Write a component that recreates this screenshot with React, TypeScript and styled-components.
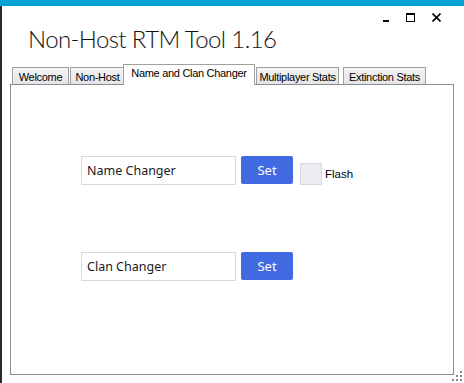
import React from "react";
import styled, { createGlobalStyle } from "styled-components";

const GlobalStyle = createGlobalStyle`
  html, body {
    margin: 0;
    padding: 0;
    background: #ffffff;
  }
`;

const Window = styled.div`
  position: relative;
  width: 464px;
  height: 383px;
  background: #ffffff;
  overflow: hidden;
  font-family: "Liberation Sans", Arial, sans-serif;
`;

const AccentBar = styled.div`
  height: 6px;
  background: #00a2d4;
`;

const Frame = styled.div`
  height: 377px;
  border-left: 2px solid #2b2b2b;
  box-sizing: border-box;
`;

const Controls = styled.div`
  display: flex;
  justify-content: flex-end;
  align-items: center;
  gap: 17px;
  height: 10px;
  padding: 6px 23px 0 0;
`;

const ControlIcon = styled.svg`
  display: block;
`;

const Title = styled.h1`
  margin: 0;
  padding: 0 0 0 26px;
  height: 41px;
  box-sizing: border-box;
  font-family: "Lato", "Open Sans", sans-serif;
  font-weight: 300;
  font-size: 24px;
  letter-spacing: -0.6px;
  line-height: 34px;
  color: #111111;
`;

const TabStrip = styled.div`
  display: flex;
  align-items: flex-end;
  height: 21px;
  padding-left: 10px;
  position: relative;
  z-index: 1;
`;

const Tab = styled.div<{ active?: boolean; w: number; offset: number }>`
  box-sizing: border-box;
  width: ${({ w }) => w}px;
  margin-left: ${({ offset }) => offset}px;
  height: ${({ active }) => (active ? "21px" : "17px")};
  margin-bottom: ${({ active }) => (active ? "-1px" : "0")};
  padding-top: ${({ active }) => (active ? "2px" : "3px")};
  border: 1px solid #a0a0a0;
  border-bottom: none;
  background: ${({ active }) =>
    active ? "#ffffff" : "linear-gradient(#f4f4f4, #e4e4e4)"};
  font-size: 11px;
  line-height: 13px;
  letter-spacing: -0.3px;
  text-align: center;
  color: #000000;
  white-space: nowrap;
  position: relative;
  z-index: ${({ active }) => (active ? 2 : 0)};
`;

const Panel = styled.div`
  box-sizing: border-box;
  margin-left: 8px;
  width: 444px;
  height: 291px;
  border: 1px solid #898c95;
  padding: 71px 0 0 70px;
  display: flex;
  flex-direction: column;
  gap: 67px;
`;

const Row = styled.div`
  display: flex;
  align-items: flex-start;
  gap: 5px;
`;

const TextBox = styled.div`
  box-sizing: border-box;
  width: 155px;
  height: 29px;
  border: 1px solid #d6d9e2;
  padding: 0 5px;
  font-family: "Noto Sans", "Open Sans", sans-serif;
  font-size: 12.5px;
  line-height: 27px;
  color: #1a1a1a;
`;

const SetButton = styled.button`
  box-sizing: border-box;
  width: 52px;
  height: 28px;
  border: none;
  border-radius: 2px;
  background: #4169e1;
  color: #ffffff;
  font-family: "Noto Sans", "Open Sans", sans-serif;
  font-size: 13px;
  padding: 0;
`;

const CheckWrap = styled.label`
  display: flex;
  align-items: center;
  gap: 3px;
  margin: 7px 0 0 2px;
  font-size: 11.5px;
  color: #000000;
`;

const CheckBox = styled.span`
  box-sizing: border-box;
  width: 22px;
  height: 22px;
  border: 1px solid #d6d8df;
  background: #ebecf0;
`;

const Grip = styled.svg`
  position: absolute;
  right: 1px;
  bottom: 1px;
`;

const tabs = [
  { label: "Welcome", w: 57, offset: 0 },
  { label: "Non-Host", w: 55, offset: 1 },
  { label: "Name and Clan Changer", w: 132, offset: -2, active: true },
  { label: "Multiplayer Stats", w: 83, offset: 1 },
  { label: "Extinction Stats", w: 83, offset: 4 },
];

export default function App() {
  return (
    <>
      <GlobalStyle />
      <Window>
        <AccentBar />
        <Frame>
          <Controls>
            <ControlIcon width="6" height="9" viewBox="0 0 6 9">
              <rect x="0" y="7" width="6" height="2" fill="#000" />
            </ControlIcon>
            <ControlIcon width="9" height="9" viewBox="0 0 9 9">
              <rect x="0.5" y="1" width="8" height="7.5" fill="none" stroke="#000" strokeWidth="1" />
              <rect x="0" y="0" width="9" height="2" fill="#000" />
            </ControlIcon>
            <ControlIcon width="9" height="9" viewBox="0 0 9 9">
              <path d="M0.5 0.5 L8.5 8.5 M8.5 0.5 L0.5 8.5" stroke="#000" strokeWidth="1.6" />
            </ControlIcon>
          </Controls>
          <Title>Non-Host RTM Tool 1.16</Title>
          <TabStrip>
            {tabs.map((t) => (
              <Tab key={t.label} active={t.active} w={t.w} offset={t.offset}>
                {t.label}
              </Tab>
            ))}
          </TabStrip>
          <Panel>
            <Row>
              <TextBox>Name Changer</TextBox>
              <SetButton>Set</SetButton>
              <CheckWrap>
                <CheckBox />
                Flash
              </CheckWrap>
            </Row>
            <Row>
              <TextBox>Clan Changer</TextBox>
              <SetButton>Set</SetButton>
            </Row>
          </Panel>
        </Frame>
        <Grip width="12" height="12" viewBox="0 0 12 12">
          <rect x="9" y="1" width="2" height="2" fill="#8a8a8a" />
          <rect x="9" y="5" width="2" height="2" fill="#8a8a8a" />
          <rect x="5" y="5" width="2" height="2" fill="#8a8a8a" />
          <rect x="9" y="9" width="2" height="2" fill="#8a8a8a" />
          <rect x="5" y="9" width="2" height="2" fill="#8a8a8a" />
          <rect x="1" y="9" width="2" height="2" fill="#8a8a8a" />
        </Grip>
      </Window>
    </>
  );
}
